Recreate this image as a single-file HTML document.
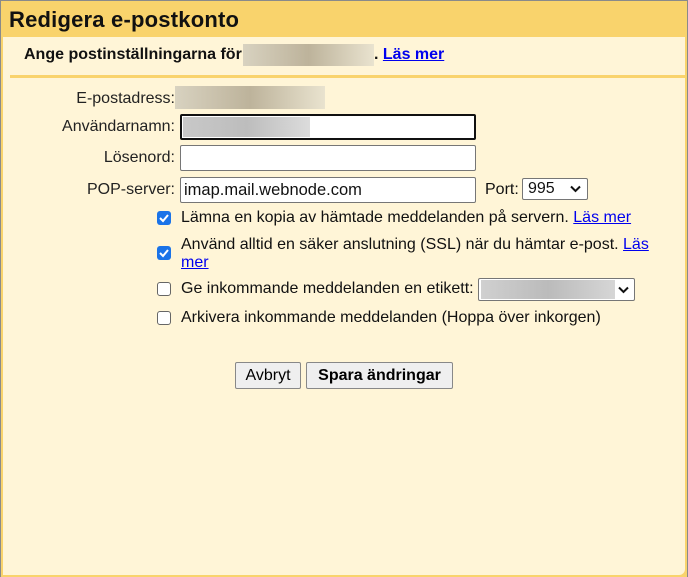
<!DOCTYPE html>
<html><head><style>
body{margin:0;width:688px;height:577px;background:#8a8a8a;font-family:"Liberation Sans",Arial,sans-serif;position:relative;overflow:hidden}
.frame{position:absolute;left:1px;top:1px;width:686px;height:576px;background:#f9d36c}
.in{position:absolute;left:3px;top:37px;width:682px;height:538px;background:#fff5d7;border-radius:0 0 6px 0}
.a{position:absolute;white-space:nowrap;font-size:16px;color:#111}
.lbl{position:absolute;right:513px;font-size:16px;color:#222;white-space:nowrap}
.box{position:absolute;background:#fff;border:1px solid #767676;border-radius:2px;box-sizing:border-box}
.blur{position:absolute;background:linear-gradient(90deg,#d8d2c0,#bdb39b 50%,#e9e3cf)}
a{color:#0000ee}
.cb{position:absolute;left:157px;width:14px;height:14px;border-radius:3px;box-sizing:border-box}
.on{background:#1a73e8}
.off{background:#fff;border:1px solid #666}
.btn{position:absolute;background:#efefef;border:1px solid #888;border-radius:2px;box-sizing:border-box;font-size:16px;text-align:center;line-height:25px}
</style></head><body>
<div class="frame"></div>
<div class="a" style="left:9px;top:7px;font-size:22px;font-weight:bold;letter-spacing:0.2px">Redigera e-postkonto</div>
<div class="in"></div>
<div class="a" style="left:24px;top:46px;font-weight:bold">Ange postinställningarna för</div>
<div class="blur" style="left:243px;top:44px;width:131px;height:22px"></div>
<div class="a" style="left:374px;top:46px;font-weight:bold">. <a href="#">Läs mer</a></div>
<div style="position:absolute;left:10px;top:75px;width:675px;height:3px;background:#f9d36c"></div>
<div class="lbl" style="top:90px">E-postadress:</div>
<div class="blur" style="left:175px;top:86px;width:150px;height:23px"></div>
<div class="lbl" style="top:118px">Användarnamn:</div>
<div class="box" style="left:180px;top:114px;width:296px;height:26px;border:2px solid #111"></div>
<div style="position:absolute;left:183px;top:117px;width:127px;height:20px;background:linear-gradient(90deg,#c8c8c8,#bdbdbd 50%,#dcdcdc)"></div>
<div class="lbl" style="top:149px">Lösenord:</div>
<div class="box" style="left:180px;top:145px;width:296px;height:26px"></div>
<div class="lbl" style="top:181px">POP-server:</div>
<div class="box" style="left:180px;top:177px;width:296px;height:26px"></div>
<div class="a" style="left:184px;top:181px;font-size:16.5px">imap.mail.webnode.com</div>
<div class="a" style="left:485px;top:181px">Port:</div>
<div class="box" style="left:522px;top:178px;width:66px;height:22px"></div>
<div class="a" style="left:528px;top:180px;font-size:16px">995</div>
<svg style="position:absolute;left:570px;top:185px" width="11" height="8"><path d="M1 1.5l4.5 4.5 4.5-4.5" fill="none" stroke="#111" stroke-width="2"/></svg>
<div class="cb on" style="top:211px"></div>
<svg style="position:absolute;left:157px;top:211px" width="14" height="14"><path d="M3 7l3 3 5-6" fill="none" stroke="#fff" stroke-width="2"/></svg>
<div class="a" style="left:181px;top:209px">Lämna en kopia av hämtade meddelanden på servern. <a href="#">Läs mer</a></div>
<div class="cb on" style="top:246px"></div>
<svg style="position:absolute;left:157px;top:246px" width="14" height="14"><path d="M3 7l3 3 5-6" fill="none" stroke="#fff" stroke-width="2"/></svg>
<div class="a" style="left:181px;top:236px">Använd alltid en säker anslutning (SSL) när du hämtar e-post. <a href="#">Läs</a></div>
<div class="a" style="left:181px;top:254px"><a href="#">mer</a></div>
<div class="cb off" style="top:282px"></div>
<div class="a" style="left:181px;top:280px">Ge inkommande meddelanden en etikett:</div>
<div class="box" style="left:478px;top:278px;width:157px;height:23px"></div>
<div style="position:absolute;left:481px;top:280px;width:134px;height:19px;background:linear-gradient(90deg,#d0d0d0,#bbb 50%,#d6d6d6)"></div>
<svg style="position:absolute;left:618px;top:286px" width="11" height="8"><path d="M1 1.5l4.5 4.5 4.5-4.5" fill="none" stroke="#111" stroke-width="2"/></svg>
<div class="cb off" style="top:311px"></div>
<div class="a" style="left:181px;top:309px">Arkivera inkommande meddelanden (Hoppa över inkorgen)</div>
<div class="btn" style="left:235px;top:362px;width:66px;height:27px">Avbryt</div>
<div class="btn" style="left:306px;top:362px;width:147px;height:27px;font-weight:bold">Spara ändringar</div>
</body></html>
